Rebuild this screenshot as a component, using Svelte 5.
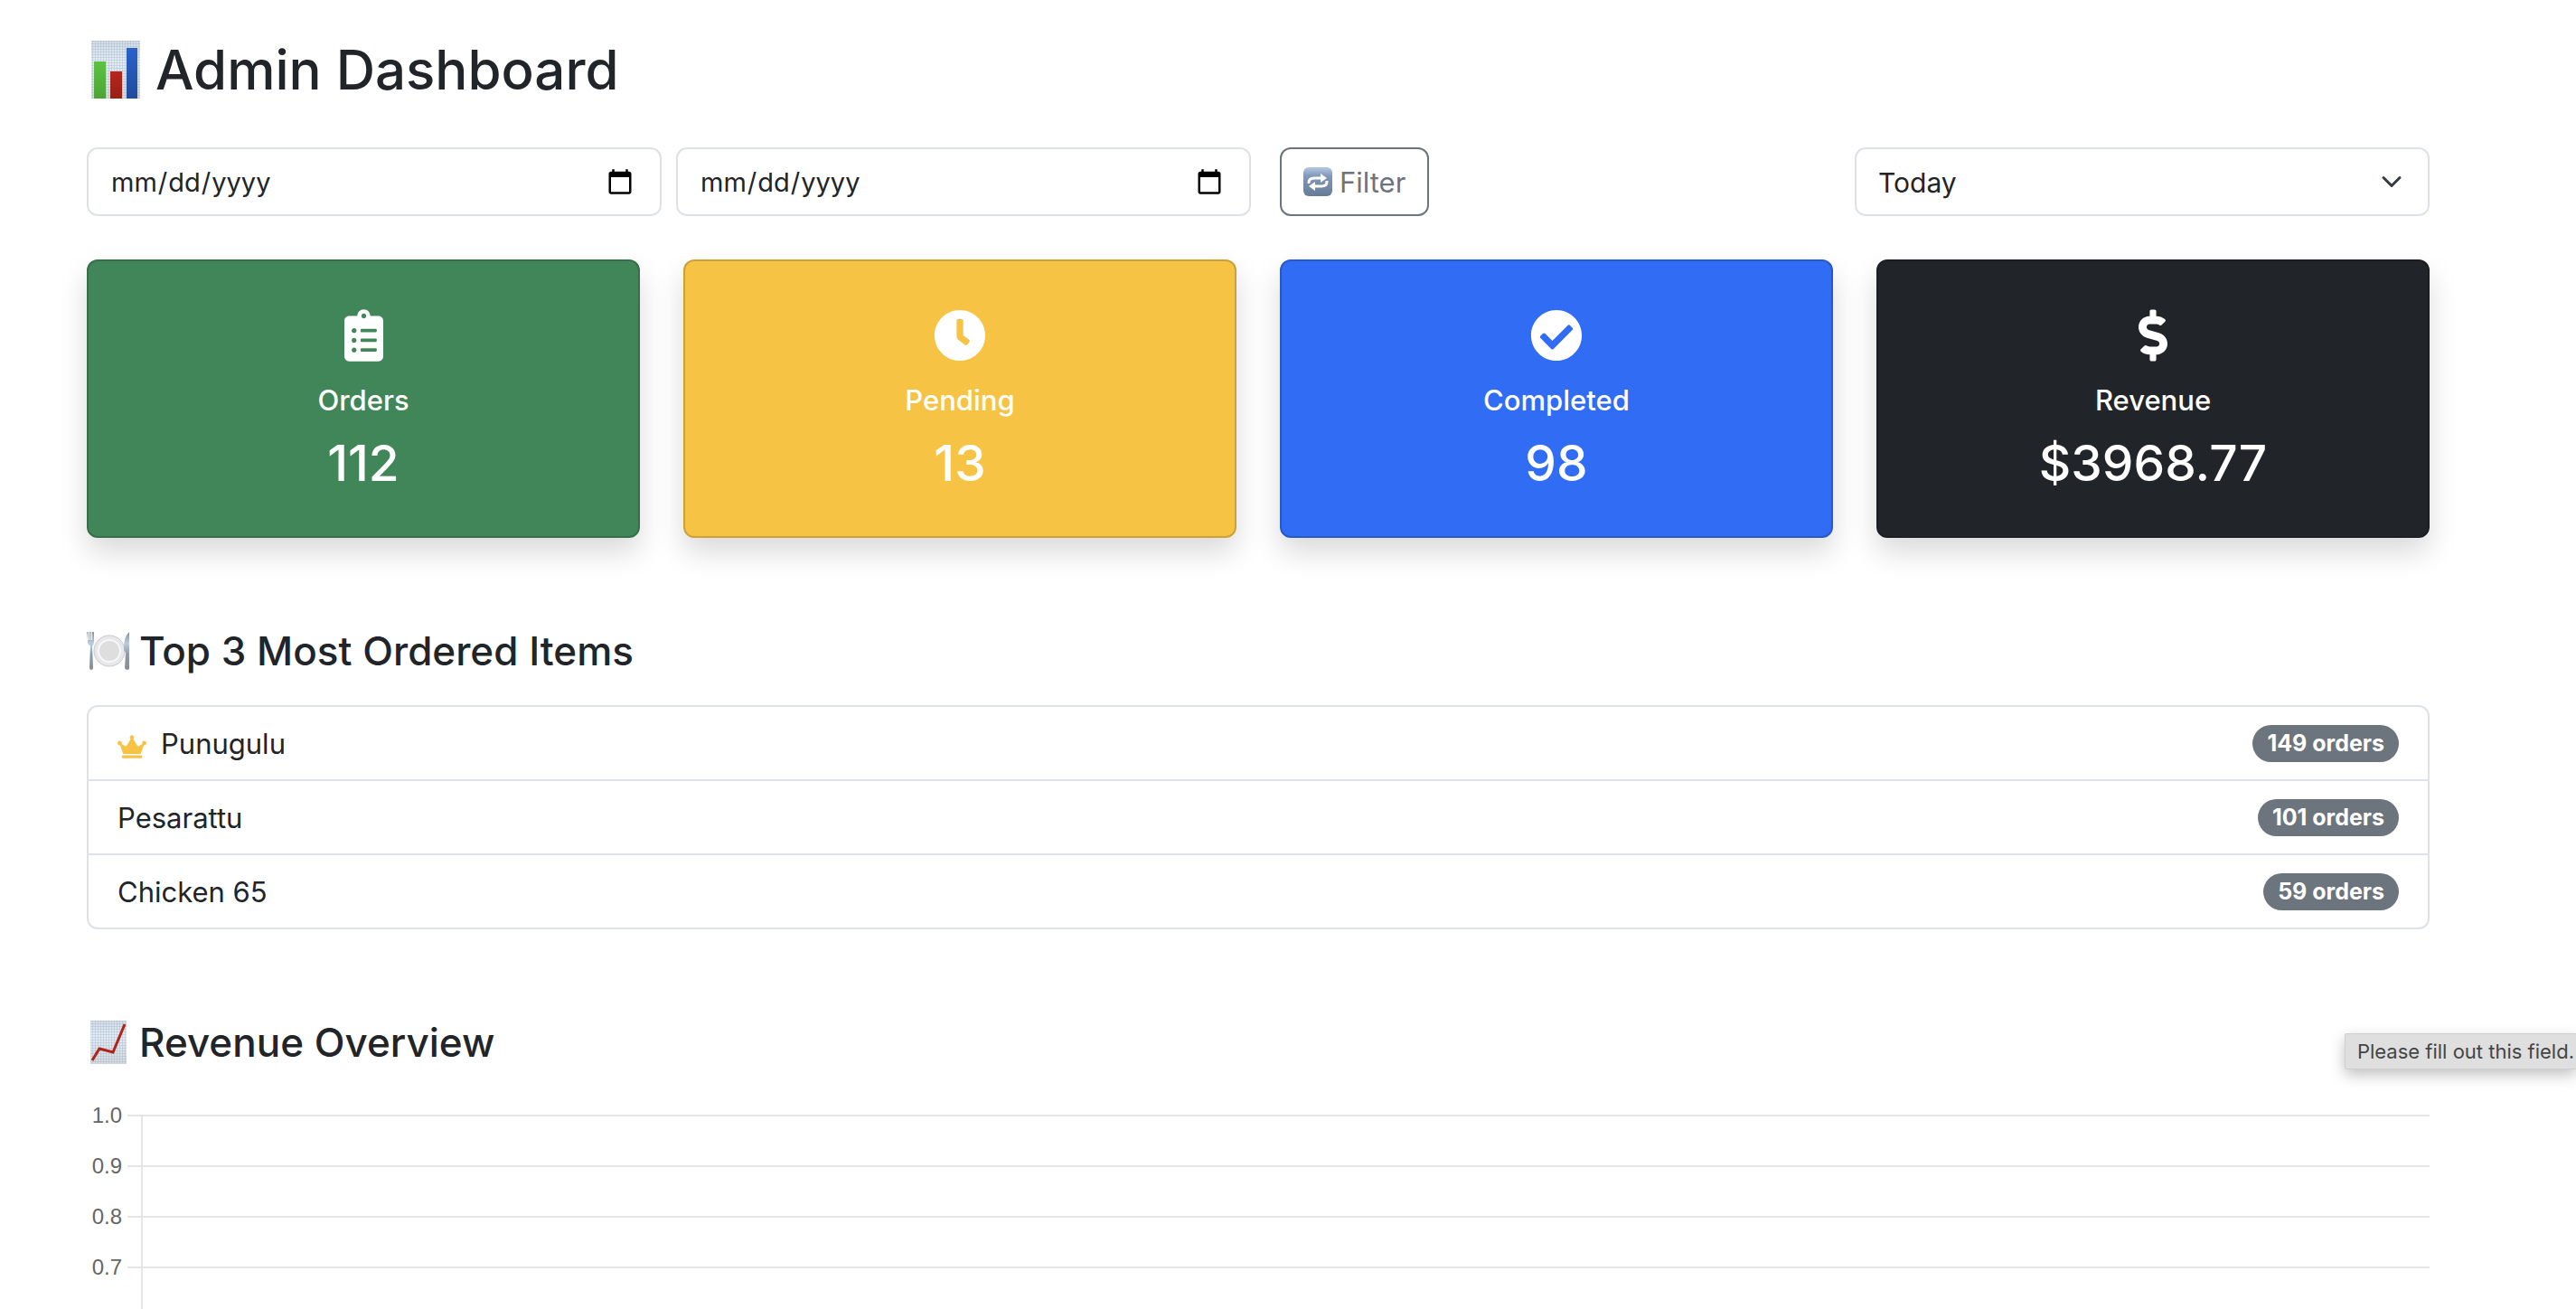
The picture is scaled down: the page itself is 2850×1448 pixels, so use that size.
<script lang="ts">
  type Card = { label: string; value: string; tone: string; box: string; width: number; path: string };

  const cards: Card[] = [
    {
      label: 'Orders', value: '112', tone: 'green', box: '0 0 384 512', width: 43,
      path: 'M336 64h-80c0-35.3-28.7-64-64-64s-64 28.7-64 64H48C21.5 64 0 85.5 0 112v352c0 26.5 21.5 48 48 48h288c26.5 0 48-21.5 48-48V112c0-26.5-21.5-48-48-48zM96 424c-13.3 0-24-10.7-24-24s10.7-24 24-24 24 10.7 24 24-10.7 24-24 24zm0-96c-13.3 0-24-10.7-24-24s10.7-24 24-24 24 10.7 24 24-10.7 24-24 24zm0-96c-13.3 0-24-10.7-24-24s10.7-24 24-24 24 10.7 24 24-10.7 24-24 24zm96-192c13.3 0 24 10.7 24 24s-10.7 24-24 24-24-10.7-24-24 10.7-24 24-24zm128 368c0 4.4-3.6 8-8 8H168c-4.4 0-8-3.6-8-8v-16c0-4.4 3.6-8 8-8h144c4.4 0 8 3.6 8 8v16zm0-96c0 4.4-3.6 8-8 8H168c-4.4 0-8-3.6-8-8v-16c0-4.4 3.6-8 8-8h144c4.4 0 8 3.6 8 8v16zm0-96c0 4.4-3.6 8-8 8H168c-4.4 0-8-3.6-8-8v-16c0-4.4 3.6-8 8-8h144c4.4 0 8 3.6 8 8v16z'
    },
    {
      label: 'Pending', value: '13', tone: 'yellow', box: '0 0 512 512', width: 58,
      path: 'M256,8C119,8,8,119,8,256S119,504,256,504,504,393,504,256,393,8,256,8Zm92.49,313h0l-20,25a16,16,0,0,1-22.49,2.5h0l-67-49.72a40,40,0,0,1-15-31.23V112a16,16,0,0,1,16-16h32a16,16,0,0,1,16,16V256l58,42.5A16,16,0,0,1,348.49,321Z'
    },
    {
      label: 'Completed', value: '98', tone: 'blue', box: '0 0 512 512', width: 58,
      path: 'M504 256c0 136.967-111.033 248-248 248S8 392.967 8 256 119.033 8 256 8s248 111.033 248 248zM227.314 387.314l184-184c6.248-6.248 6.248-16.379 0-22.627l-22.627-22.627c-6.248-6.249-16.379-6.249-22.628 0L216 308.118l-70.059-70.059c-6.248-6.248-16.379-6.248-22.628 0l-22.627 22.627c-6.248 6.248-6.248 16.379 0 22.627l104 104c6.249 6.249 16.379 6.249 22.628.001z'
    },
    {
      label: 'Revenue', value: '$3968.77', tone: 'dark', box: '0 0 288 512', width: 32,
      path: 'M209.2 233.4l-108-31.6C88.7 198.2 80 186.5 80 173.5c0-16.3 13.2-29.5 29.5-29.5h66.3c12.2 0 24.2 3.7 34.2 10.5 6.1 4.1 14.3 3.1 19.5-2l34.8-34c7.1-6.9 6.1-18.4-1.8-24.5C238 74.8 207.4 64.1 176 64V16c0-8.8-7.2-16-16-16h-32c-8.8 0-16 7.2-16 16v48h-2.5C45.8 64-5.4 118.7.5 183.6c4.2 46.1 39.4 83.6 83.8 96.6l102.5 30c12.5 3.7 21.2 15.3 21.2 28.3 0 16.3-13.2 29.5-29.5 29.5h-66.3C100 368 88 364.3 78 357.5c-6.1-4.1-14.3-3.1-19.5 2l-34.8 34c-7.1 6.9-6.1 18.4 1.8 24.5 24.5 19.2 55.1 29.9 86.5 30v48c0 8.8 7.2 16 16 16h32c8.8 0 16-7.2 16-16v-48.2c46.6-.9 90.3-28.6 105.7-72.7 21.5-61.6-14.6-124.8-72.5-141.7z'
    }
  ];

  const items = [
    { name: 'Punugulu', orders: 149 },
    { name: 'Pesarattu', orders: 101 },
    { name: 'Chicken 65', orders: 59 }
  ];

  const ticks = ['1.0', '0.9', '0.8', '0.7'];
</script>

<main>
  <h1>
    <svg class="emoji-lg" viewBox="0 0 64 64" aria-hidden="true">
      <defs>
        <linearGradient id="sheet" x1="0" y1="0" x2="0" y2="1"><stop offset="0" stop-color="#d3dde8" /><stop offset=".35" stop-color="#e2edf8" /><stop offset="1" stop-color="#d5d9e0" /></linearGradient>
        <linearGradient id="g" x1="0" y1="0" x2="0" y2="1"><stop offset="0" stop-color="#5cc341" /><stop offset="1" stop-color="#4ca436" /></linearGradient>
        <linearGradient id="r" x1="0" y1="0" x2="0" y2="1"><stop offset="0" stop-color="#b7261b" /><stop offset="1" stop-color="#962015" /></linearGradient>
        <linearGradient id="b" x1="0" y1="0" x2="0" y2="1"><stop offset="0" stop-color="#2a62cc" /><stop offset="1" stop-color="#214b9c" /></linearGradient>
        <pattern id="mesh" width="3" height="3" patternUnits="userSpaceOnUse"><path d="M0 .5h3M.5 0v3" stroke="#9aa9ba" stroke-opacity=".4" stroke-width=".8" /></pattern>
      </defs>
      <rect x="5" width="54" height="64" fill="url(#sheet)" />
      <rect x="5" width="54" height="64" fill="url(#mesh)" />
      <rect x="8" y="23" width="13" height="41" fill="url(#g)" />
      <rect x="26" y="34" width="13" height="30" fill="url(#r)" />
      <rect x="44" y="8" width="12" height="56" fill="url(#b)" />
    </svg>
    Admin Dashboard
  </h1>

  <form class="filters" onsubmit={(e) => e.preventDefault()}>
    <input type="date" aria-label="Start date" required />
    <input type="date" aria-label="End date" required />
    <div class="action">
      <button type="submit">
        <svg class="repeat" viewBox="0 0 32 32" aria-hidden="true">
          <defs><linearGradient id="key" x1="0" y1="0" x2="0" y2="1"><stop offset="0" stop-color="#b4c8e2" /><stop offset=".3" stop-color="#8199ba" /><stop offset="1" stop-color="#667b97" /></linearGradient></defs>
          <rect width="32" height="32" rx="6" fill="url(#key)" />
          <g fill="none" stroke="#fff" stroke-width="3"><path d="M6 18v-1q0-5 6-5h8" /><path d="M26 15v1q0 5-6 5h-8" /></g>
          <path d="M19 7l7 5-7 5zM13 16v10l-7-5z" fill="#fff" />
        </svg>
        Filter
      </button>
    </div>
    <div class="select">
      <select aria-label="Period"><option>Today</option></select>
      <svg class="chevron" viewBox="0 0 16 16" aria-hidden="true"><path d="m2 5 6 6 6-6" fill="none" stroke="#343a40" stroke-width="2" stroke-linecap="round" stroke-linejoin="round" /></svg>
    </div>
  </form>

  <section class="cards">
    {#each cards as card}
      <article class="card {card.tone}">
        <div class="icon"><svg viewBox={card.box} width={card.width} height="58" aria-hidden="true"><path d={card.path} /></svg></div>
        <h2 class="label">{card.label}</h2>
        <p class="value">{card.value}</p>
      </article>
    {/each}
  </section>

  <h2 class="heading">
    <svg class="emoji" viewBox="0 0 48 48" aria-hidden="true">
      <defs>
        <linearGradient id="metal" x1="0" y1="0" x2="0" y2="1"><stop offset="0" stop-color="#8d9094" /><stop offset=".3" stop-color="#b9cbe2" /><stop offset=".6" stop-color="#8f99a8" /><stop offset="1" stop-color="#8a8c90" /></linearGradient>
      </defs>
      <circle cx="25" cy="24" r="17" fill="#e8e8e9" stroke="#c6c7ca" />
      <circle cx="25" cy="24" r="12" fill="#dededf" stroke="#f6f7fa" stroke-width="2" />
      <path d="M0 3h1v9h1V3h1v9h1V3h1v9h1V3h2v11q0 3-2 4l1 24q0 3-2 3t-2-3l1-24q-3-1-3-4z" fill="url(#metal)" />
      <path d="M47 3v40q0 2-2 2t-3-2l1-17q-2-2-2-5 0-13 6-18z" fill="url(#metal)" />
    </svg>
    Top 3 Most Ordered Items
  </h2>
  <ul class="items">
    {#each items as item, i}
      <li>
        <span class="name">
          {#if i === 0}
            <svg class="crown" viewBox="0 0 640 512" aria-hidden="true"><path d="M528 448H112c-8.8 0-16 7.2-16 16v32c0 8.8 7.2 16 16 16h416c8.8 0 16-7.2 16-16v-32c0-8.8-7.2-16-16-16zm64-320c-26.5 0-48 21.5-48 48 0 7.1 1.6 13.7 4.4 19.8L476 239.2c-15.4 9.2-35.3 4-44.2-11.6L350.3 85C361 76.2 368 63 368 48c0-26.5-21.5-48-48-48s-48 21.5-48 48c0 15 7 28.2 17.7 37l-81.5 142.6c-8.9 15.6-28.9 20.8-44.2 11.6l-72.3-43.4c2.7-6 4.4-12.7 4.4-19.8 0-26.5-21.5-48-48-48S0 149.5 0 176s21.5 48 48 48c2.6 0 5.2-.4 7.7-.8L128 416h384l72.3-192.8c2.5.4 5.1.8 7.7.8 26.5 0 48-21.5 48-48s-21.5-48-48-48z" /></svg>
          {/if}
          {item.name}
        </span>
        <span class="badge">{item.orders} orders</span>
      </li>
    {/each}
  </ul>

  <h2 class="heading">
    <svg class="emoji" viewBox="0 0 48 48" aria-hidden="true">
      <rect x="4" width="40" height="48" fill="url(#sheet)" />
      <rect x="4" width="40" height="48" fill="url(#mesh)" />
      <path d="M6 44l8-13 15 4L42 4" fill="none" stroke="#b32218" stroke-width="3" />
    </svg>
    Revenue Overview
  </h2>
  <div class="chart">
    {#each ticks as tick}
      <div class="tick"><span>{tick}</span><i></i></div>
    {/each}
  </div>

  <div class="tooltip" role="tooltip">Please fill out this field.</div>
</main>

<style>
  :global(body) {
    background: #fff;
    color: #212529;
    font-family: Inter, 'Liberation Sans', sans-serif;
    font-size: 31px;
    line-height: 48px;
  }
  * { box-sizing: border-box; }
  main {
    position: relative;
    display: flex;
    flex-direction: column;
    min-height: 100vh;
    padding: 38px 162px 0 96px;
    overflow: hidden;
  }
  h1, h2, p, ul { margin: 0; padding: 0; font-weight: 500; }
  h1 {
    display: flex;
    align-items: center;
    gap: 12px;
    margin-bottom: 47px;
    font-size: 60px;
    line-height: 78px;
  }
  .emoji-lg { width: 64px; height: 64px; }
  .emoji { width: 48px; height: 48px; }

  .filters {
    display: grid;
    grid-template-columns: repeat(4, minmax(0, 1fr));
    gap: 16px;
    margin-bottom: 48px;
  }
  input, select, button {
    height: 76px;
    padding: 13px 24px 11px;
    border: 2px solid #dee2e6;
    border-radius: 12px;
    background: #fff;
    color: #212529;
    font: inherit;
    font-size: 30px;
  }
  input, select { width: 100%; }
  input { font-size: 29px; }
  input::-webkit-calendar-picker-indicator { width: 32px; height: 32px; padding: 0; margin-right: 4px; }
  .action { padding-left: 16px; }
  button {
    display: flex;
    align-items: center;
    gap: 8px;
    border-color: #6c757d;
    color: #6c757d;
    font-size: 31px;
  }
  .repeat { width: 32px; height: 32px; margin-bottom: 2px; }
  .select { position: relative; }
  select { appearance: none; }
  .chevron {
    position: absolute;
    top: 26px;
    right: 30px;
    width: 24px;
    height: 24px;
    pointer-events: none;
  }

  .cards {
    display: grid;
    grid-template-columns: repeat(4, minmax(0, 1fr));
    gap: 48px;
    margin-bottom: 96px;
  }
  .card {
    padding: 48px 32px;
    border: 2px solid;
    border-radius: 12px;
    box-shadow: 0 16px 32px rgba(0, 0, 0, 0.15);
    color: #fff;
    text-align: center;
  }
  .green { background: #418658; border-color: #366f49; }
  .yellow { background: #f6c344; border-color: #cba138; }
  .blue { background: #316cf4; border-color: #2859c9; }
  .dark { background: #212529; border-color: #1b1e22; }
  .icon {
    display: flex;
    align-items: center;
    justify-content: center;
    height: 68px;
    margin-bottom: 19px;
  }
  .icon svg { fill: #fff; }
  .label { margin-bottom: 17px; font-size: 31px; line-height: 38px; }
  .value { font-size: 55px; line-height: 66px; }

  .heading {
    display: flex;
    align-items: center;
    gap: 10px;
    padding-top: 1px;
    font-size: 44px;
    line-height: 56px;
  }
  .items {
    margin: 32px 0 96px;
    border: 2px solid #dee2e6;
    border-radius: 12px;
    list-style: none;
    font-weight: 400;
  }
  li {
    display: flex;
    align-items: center;
    justify-content: space-between;
    padding: 16px 32px;
  }
  li + li { border-top: 2px solid #dee2e6; }
  .name { display: flex; align-items: center; gap: 16px; padding-top: 2px; line-height: 46px; }
  .crown { width: 32px; height: 26px; margin-top: 6px; fill: #f6c344; }
  .badge {
    padding: 8px 16px;
    border-radius: 24px;
    background: #6c757d;
    color: #fff;
    font-size: 25px;
    font-weight: 700;
    line-height: 25px;
  }

  .chart {
    position: relative;
    flex: 1;
    margin-top: 25px;
    color: #666;
    font: 24px/28px 'Liberation Sans', Arial, sans-serif;
  }
  .chart::before {
    content: '';
    position: absolute;
    top: 27px;
    bottom: 0;
    left: 60px;
    width: 2px;
    background: #e5e5e5;
  }
  .tick { display: flex; align-items: center; height: 56px; }
  .tick span { width: 45px; padding-right: 6px; text-align: right; }
  .tick i { flex: 1; height: 2px; background: #e5e5e5; }

  .tooltip {
    position: absolute;
    top: 1143px;
    right: 0;
    padding: 5px 2px 5px 13px;
    border: 1px solid #cfcfcf;
    border-right: 0;
    border-radius: 2px 0 0 2px;
    background: #dfdfdf;
    box-shadow: 0 6px 16px rgba(0, 0, 0, 0.25);
    color: #454545;
    font-size: 22px;
    line-height: 28px;
  }
</style>
